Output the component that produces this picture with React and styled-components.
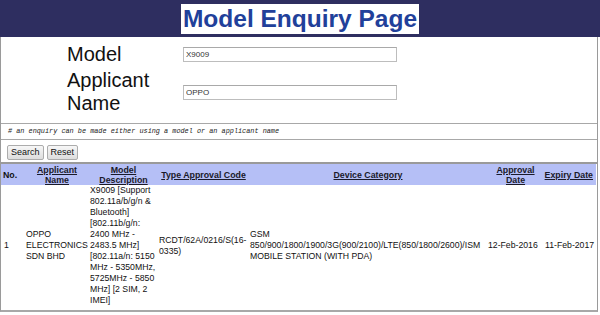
import React from "react";
import styled, { createGlobalStyle } from "styled-components";

const Global = createGlobalStyle`
  html, body { margin: 0; padding: 0; background: #fff; }
  body { font-family: "Liberation Sans", Arial, sans-serif; color: #111; }
`;

const Page = styled.div`
  width: 600px;
`;

const Banner = styled.header`
  height: 37px;
  background: #2e2e60;
  display: flex;
  justify-content: center;
  align-items: center;
`;

const Title = styled.h1`
  margin: 0;
  background: #fff;
  color: #21409a;
  font: bold 24.5px/30px "Liberation Sans", Arial, sans-serif;
  padding: 0 2px;
  height: 30px;
`;

const Panel = styled.main`
  width: 596px;
  border-left: 1px solid #9a9a9a;
  border-right: 1px solid #9a9a9a;
  border-bottom: 2px solid #a8a8a8;
`;

const Form = styled.section`
  display: grid;
  grid-template-columns: 116px 214px;
  row-gap: 3px;
  padding: 6px 0 8px 66px;
  border-bottom: 1px solid #a8a8a8;
`;

const Label = styled.label`
  font-size: 20px;
  line-height: 23px;
  color: #111;
`;

const Input = styled.input`
  box-sizing: border-box;
  align-self: center;
  width: 214px;
  height: 15px;
  margin: 0;
  padding: 0 2px;
  border: 1px solid #bdbdbd;
  border-top-color: #a9a9a9;
  font: 8px "Liberation Sans", Arial, sans-serif;
  color: #333;
  outline: none;
`;

const Note = styled.p`
  margin: 0;
  height: 15px;
  line-height: 15px;
  padding-left: 7px;
  font: italic 6.85px/15px "Liberation Mono", "Courier New", monospace;
  color: #222;
  border-bottom: 1px solid #a8a8a8;
`;

const Actions = styled.div`
  display: flex;
  gap: 3px;
  padding: 5px 0 2px 6px;
  border-bottom: 2px solid #9a9a9a;
`;

const Button = styled.button`
  box-sizing: border-box;
  height: 15px;
  margin: 0;
  padding: 0 3px;
  border: 1px solid #acacac;
  border-radius: 2px;
  background: linear-gradient(#f7f7f7, #dddddd);
  font: 9px/13px "Liberation Sans", Arial, sans-serif;
  color: #111;
`;

const Table = styled.table`
  border-collapse: collapse;
  table-layout: fixed;
  width: 595px;
  margin: 0 0 4px 0;
  font-family: "Liberation Sans", Arial, sans-serif;
`;

const HeadRow = styled.tr`
  background: #b5bff6;
  height: 21px;
`;

const Th = styled.th`
  padding: 0 ${(p) => p.$padRight ?? 1}px 0 ${(p) => p.$padLeft ?? 1}px;
  font-size: 8.8px;
  line-height: 10px;
  font-weight: bold;
  text-align: ${(p) => p.$align || "center"};
  vertical-align: middle;
  white-space: ${(p) => (p.$nowrap ? "nowrap" : "normal")};
  overflow: visible;
`;

const HeadLink = styled.span`
  color: #1a1a2a;
  text-decoration: underline;
`;

const Td = styled.td`
  padding: 0 1px 0 ${(p) => p.$padLeft ?? 1}px;
  font-size: 8.7px;
  line-height: 11px;
  color: #111;
  text-align: left;
  vertical-align: middle;
  white-space: ${(p) => (p.$nowrap ? "nowrap" : "normal")};
  overflow: visible;
`;

const NoWrap = styled.span`
  white-space: nowrap;
`;

const columns = [24, 64, 69, 91, 238, 57, 52];

export default function App() {
  return (
    <Page>
      <Global />
      <Banner>
        <Title>Model Enquiry Page</Title>
      </Banner>
      <Panel>
        <Form>
          <Label>Model</Label>
          <Input defaultValue="X9009" />
          <Label>
            Applicant
            <br />
            Name
          </Label>
          <Input defaultValue="OPPO" />
        </Form>
        <Note># an enquiry can be made either using a model or an applicant name</Note>
        <Actions>
          <Button>Search</Button>
          <Button>Reset</Button>
        </Actions>
        <Table>
          <colgroup>
            {columns.map((w, i) => (
              <col key={i} style={{ width: w }} />
            ))}
          </colgroup>
          <thead>
            <HeadRow>
              <Th $align="left" $padLeft={2}>No.</Th>
              <Th><HeadLink>Applicant Name</HeadLink></Th>
              <Th><HeadLink>Model Description</HeadLink></Th>
              <Th $nowrap><HeadLink>Type Approval Code</HeadLink></Th>
              <Th><HeadLink>Device Category</HeadLink></Th>
              <Th><HeadLink>Approval Date</HeadLink></Th>
              <Th $nowrap $align="right" $padRight={3} $padLeft={0}><HeadLink>Expiry Date</HeadLink></Th>
            </HeadRow>
          </thead>
          <tbody>
            <tr>
              <Td $padLeft={3}>1</Td>
              <Td>OPPO ELECTRONICS SDN BHD</Td>
              <Td>
                X9009 [Support 802.11a/b/g/n &amp; Bluetooth] [802.11b/g/n: 2400 MHz - 2483.5 MHz] [802.11a/n: 5150 MHz - 5350MHz, 5725MHz - 5850 MHz] [2 SIM, 2 IMEI]
              </Td>
              <Td>RCDT/62A/0216/S(16-0335)</Td>
              <Td>
                GSM <NoWrap>850/900/1800/1900/3G(900/2100)/LTE(850/1800/2600)/ISM</NoWrap> MOBILE STATION (WITH PDA)
              </Td>
              <Td $nowrap>12-Feb-2016</Td>
              <Td $nowrap>11-Feb-2017</Td>
            </tr>
          </tbody>
        </Table>
      </Panel>
    </Page>
  );
}
